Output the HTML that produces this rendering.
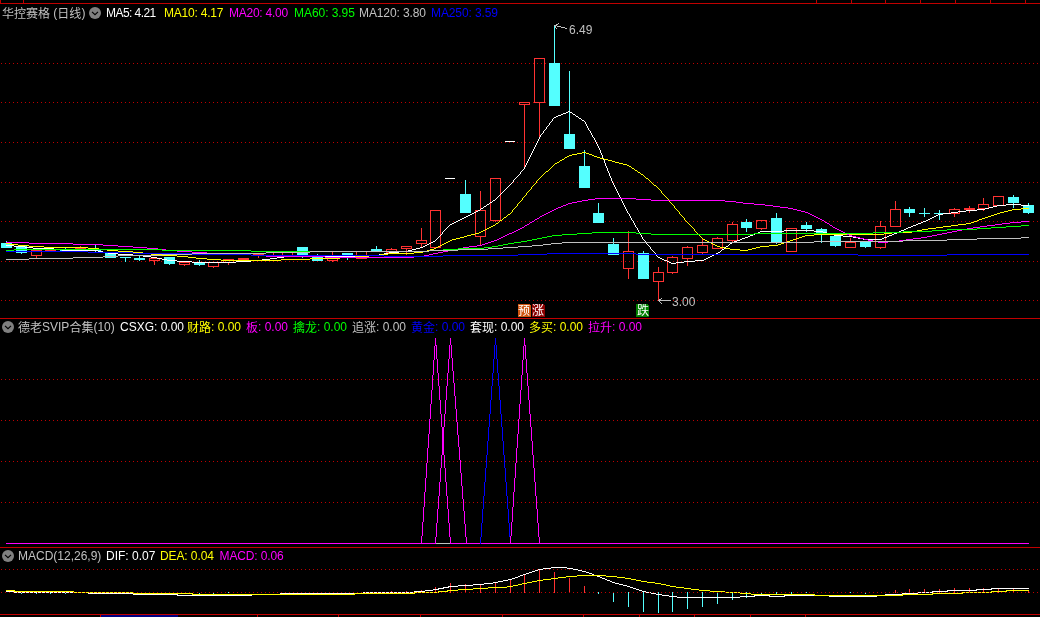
<!DOCTYPE html>
<html><head><meta charset="utf-8"><title>华控赛格(日线)</title>
<style>
html,body{margin:0;padding:0;background:#000;}
#app{position:relative;width:1040px;height:617px;background:#000;overflow:hidden;}
svg{position:absolute;left:0;top:0;}
.t{position:absolute;white-space:pre;font:12px/14px "Liberation Sans","Noto Sans CJK SC",sans-serif;}
.z{position:relative;top:1px;}
.pl{display:inline-block;width:6px;text-align:right;}
.pr{display:inline-block;width:6px;text-align:left;}
#txt{position:absolute;left:0;top:0;width:1040px;height:617px;will-change:transform;transform:translateZ(0);}
</style></head><body>
<div id="app">
<svg width="1040" height="617" viewBox="0 0 1040 617" shape-rendering="crispEdges">
<rect x="0" y="3" width="1040" height="1" fill="#C00000"/>
<rect x="0" y="0" width="1" height="4" fill="#C00000"/>
<rect x="23" y="0" width="1" height="4" fill="#C00000"/>
<rect x="816" y="0" width="1" height="4" fill="#C00000"/>
<rect x="851" y="0" width="1" height="4" fill="#C00000"/>
<rect x="885" y="0" width="1" height="4" fill="#C00000"/>
<rect x="920" y="0" width="1" height="4" fill="#C00000"/>
<rect x="955" y="0" width="1" height="4" fill="#C00000"/>
<rect x="990" y="0" width="1" height="4" fill="#C00000"/>
<rect x="1025" y="0" width="1" height="4" fill="#C00000"/>
<line x1="1" y1="63.5" x2="1040" y2="63.5" stroke="#C00000" stroke-width="1" stroke-dasharray="1 3"/>
<line x1="1" y1="102.5" x2="1040" y2="102.5" stroke="#C00000" stroke-width="1" stroke-dasharray="1 3"/>
<line x1="1" y1="142.5" x2="1040" y2="142.5" stroke="#C00000" stroke-width="1" stroke-dasharray="1 3"/>
<line x1="1" y1="182.5" x2="1040" y2="182.5" stroke="#C00000" stroke-width="1" stroke-dasharray="1 3"/>
<line x1="1" y1="221.5" x2="1040" y2="221.5" stroke="#C00000" stroke-width="1" stroke-dasharray="1 3"/>
<line x1="1" y1="261.5" x2="1040" y2="261.5" stroke="#C00000" stroke-width="1" stroke-dasharray="1 3"/>
<line x1="1" y1="300.5" x2="1040" y2="300.5" stroke="#C00000" stroke-width="1" stroke-dasharray="1 3"/>
<rect x="0" y="318" width="1040" height="1" fill="#C00000"/>
<line x1="1" y1="379.5" x2="1040" y2="379.5" stroke="#C00000" stroke-width="1" stroke-dasharray="1 3"/>
<line x1="1" y1="420.5" x2="1040" y2="420.5" stroke="#C00000" stroke-width="1" stroke-dasharray="1 3"/>
<line x1="1" y1="461.5" x2="1040" y2="461.5" stroke="#C00000" stroke-width="1" stroke-dasharray="1 3"/>
<line x1="1" y1="502.5" x2="1040" y2="502.5" stroke="#C00000" stroke-width="1" stroke-dasharray="1 3"/>
<rect x="0" y="547" width="1040" height="1" fill="#C00000"/>
<line x1="1" y1="569.5" x2="1040" y2="569.5" stroke="#C00000" stroke-width="1" stroke-dasharray="1 3"/>
<line x1="1" y1="592.5" x2="1040" y2="592.5" stroke="#C00000" stroke-width="1" stroke-dasharray="1 3"/>
<rect x="0" y="614" width="1040" height="1" fill="#C00000"/>
<rect x="100" y="614" width="1" height="3" fill="#C00000"/>
<rect x="177" y="614" width="1" height="3" fill="#C00000"/>
<rect x="257" y="614" width="1" height="3" fill="#C00000"/>
<rect x="338" y="614" width="1" height="3" fill="#C00000"/>
<rect x="420" y="614" width="1" height="3" fill="#C00000"/>
<rect x="502" y="614" width="1" height="3" fill="#C00000"/>
<rect x="583" y="614" width="1" height="3" fill="#C00000"/>
<rect x="639" y="614" width="1" height="3" fill="#C00000"/>
<rect x="694" y="614" width="1" height="3" fill="#C00000"/>
<rect x="750" y="614" width="1" height="3" fill="#C00000"/>
<rect x="805" y="614" width="1" height="3" fill="#C00000"/>
<rect x="101" y="615" width="77" height="2" fill="#000080"/>
<rect x="6" y="241" width="1" height="7" fill="#54FFFF"/>
<rect x="1" y="243" width="11" height="5" fill="#54FFFF"/>
<rect x="21" y="246" width="1" height="8" fill="#54FFFF"/>
<rect x="16" y="246" width="11" height="7" fill="#54FFFF"/>
<rect x="36" y="250" width="1" height="1" fill="#FF3232"/>
<rect x="36" y="255" width="1" height="3" fill="#FF3232"/>
<rect x="31" y="250" width="11" height="1" fill="#FF3232"/>
<rect x="31" y="255" width="11" height="1" fill="#FF3232"/>
<rect x="31" y="250" width="1" height="6" fill="#FF3232"/>
<rect x="41" y="250" width="1" height="6" fill="#FF3232"/>
<rect x="50" y="250" width="1" height="1" fill="#FF3232"/>
<rect x="50" y="250" width="1" height="1" fill="#FF3232"/>
<rect x="45" y="250" width="11" height="1" fill="#FF3232"/>
<rect x="65" y="248" width="1" height="3" fill="#54FFFF"/>
<rect x="60" y="250" width="11" height="1" fill="#54FFFF"/>
<rect x="80" y="246" width="1" height="3" fill="#FF3232"/>
<rect x="80" y="248" width="1" height="1" fill="#FF3232"/>
<rect x="75" y="248" width="11" height="1" fill="#FF3232"/>
<rect x="95" y="245" width="1" height="8" fill="#54FFFF"/>
<rect x="90" y="250" width="11" height="1" fill="#54FFFF"/>
<rect x="110" y="253" width="1" height="5" fill="#54FFFF"/>
<rect x="105" y="253" width="11" height="5" fill="#54FFFF"/>
<rect x="125" y="257" width="1" height="5" fill="#54FFFF"/>
<rect x="120" y="257" width="11" height="1" fill="#54FFFF"/>
<rect x="139" y="256" width="1" height="5" fill="#54FFFF"/>
<rect x="134" y="258" width="11" height="2" fill="#54FFFF"/>
<rect x="154" y="258" width="1" height="1" fill="#FF3232"/>
<rect x="154" y="260" width="1" height="5" fill="#FF3232"/>
<rect x="149" y="258" width="11" height="1" fill="#FF3232"/>
<rect x="149" y="260" width="11" height="1" fill="#FF3232"/>
<rect x="149" y="258" width="1" height="3" fill="#FF3232"/>
<rect x="159" y="258" width="1" height="3" fill="#FF3232"/>
<rect x="169" y="257" width="1" height="8" fill="#54FFFF"/>
<rect x="164" y="257" width="11" height="7" fill="#54FFFF"/>
<rect x="184" y="262" width="1" height="1" fill="#FF3232"/>
<rect x="184" y="264" width="1" height="2" fill="#FF3232"/>
<rect x="179" y="262" width="11" height="1" fill="#FF3232"/>
<rect x="179" y="264" width="11" height="1" fill="#FF3232"/>
<rect x="179" y="262" width="1" height="3" fill="#FF3232"/>
<rect x="189" y="262" width="1" height="3" fill="#FF3232"/>
<rect x="199" y="260" width="1" height="6" fill="#54FFFF"/>
<rect x="194" y="263" width="11" height="2" fill="#54FFFF"/>
<rect x="213" y="262" width="1" height="1" fill="#FF3232"/>
<rect x="213" y="266" width="1" height="2" fill="#FF3232"/>
<rect x="208" y="262" width="11" height="1" fill="#FF3232"/>
<rect x="208" y="266" width="11" height="1" fill="#FF3232"/>
<rect x="208" y="262" width="1" height="5" fill="#FF3232"/>
<rect x="218" y="262" width="1" height="5" fill="#FF3232"/>
<rect x="228" y="259" width="1" height="1" fill="#FF3232"/>
<rect x="228" y="262" width="1" height="3" fill="#FF3232"/>
<rect x="223" y="259" width="11" height="1" fill="#FF3232"/>
<rect x="223" y="262" width="11" height="1" fill="#FF3232"/>
<rect x="223" y="259" width="1" height="4" fill="#FF3232"/>
<rect x="233" y="259" width="1" height="4" fill="#FF3232"/>
<rect x="243" y="258" width="1" height="1" fill="#FF3232"/>
<rect x="243" y="259" width="1" height="1" fill="#FF3232"/>
<rect x="238" y="258" width="11" height="2" fill="#FF3232"/>
<rect x="258" y="254" width="1" height="1" fill="#FF3232"/>
<rect x="258" y="254" width="1" height="4" fill="#FF3232"/>
<rect x="253" y="254" width="11" height="1" fill="#FF3232"/>
<rect x="273" y="253" width="1" height="3" fill="#FF3232"/>
<rect x="273" y="255" width="1" height="1" fill="#FF3232"/>
<rect x="268" y="255" width="11" height="1" fill="#FF3232"/>
<rect x="287" y="252" width="1" height="1" fill="#FF3232"/>
<rect x="287" y="255" width="1" height="1" fill="#FF3232"/>
<rect x="282" y="252" width="11" height="1" fill="#FF3232"/>
<rect x="282" y="255" width="11" height="1" fill="#FF3232"/>
<rect x="282" y="252" width="1" height="4" fill="#FF3232"/>
<rect x="292" y="252" width="1" height="4" fill="#FF3232"/>
<rect x="302" y="247" width="1" height="11" fill="#54FFFF"/>
<rect x="297" y="247" width="11" height="8" fill="#54FFFF"/>
<rect x="317" y="254" width="1" height="7" fill="#54FFFF"/>
<rect x="312" y="256" width="11" height="5" fill="#54FFFF"/>
<rect x="332" y="252" width="1" height="6" fill="#FF3232"/>
<rect x="332" y="260" width="1" height="2" fill="#FF3232"/>
<rect x="327" y="257" width="11" height="1" fill="#FF3232"/>
<rect x="327" y="260" width="11" height="1" fill="#FF3232"/>
<rect x="327" y="257" width="1" height="4" fill="#FF3232"/>
<rect x="337" y="257" width="1" height="4" fill="#FF3232"/>
<rect x="347" y="253" width="1" height="7" fill="#54FFFF"/>
<rect x="342" y="253" width="11" height="2" fill="#54FFFF"/>
<rect x="361" y="251" width="1" height="1" fill="#FF3232"/>
<rect x="361" y="258" width="1" height="1" fill="#FF3232"/>
<rect x="356" y="251" width="11" height="1" fill="#FF3232"/>
<rect x="356" y="258" width="11" height="1" fill="#FF3232"/>
<rect x="356" y="251" width="1" height="8" fill="#FF3232"/>
<rect x="366" y="251" width="1" height="8" fill="#FF3232"/>
<rect x="376" y="246" width="1" height="5" fill="#54FFFF"/>
<rect x="371" y="249" width="11" height="2" fill="#54FFFF"/>
<rect x="391" y="248" width="1" height="2" fill="#FF3232"/>
<rect x="391" y="252" width="1" height="2" fill="#FF3232"/>
<rect x="386" y="249" width="11" height="1" fill="#FF3232"/>
<rect x="386" y="252" width="11" height="1" fill="#FF3232"/>
<rect x="386" y="249" width="1" height="4" fill="#FF3232"/>
<rect x="396" y="249" width="1" height="4" fill="#FF3232"/>
<rect x="406" y="246" width="1" height="1" fill="#FF3232"/>
<rect x="406" y="248" width="1" height="7" fill="#FF3232"/>
<rect x="401" y="246" width="11" height="1" fill="#FF3232"/>
<rect x="401" y="248" width="11" height="1" fill="#FF3232"/>
<rect x="401" y="246" width="1" height="3" fill="#FF3232"/>
<rect x="411" y="246" width="1" height="3" fill="#FF3232"/>
<rect x="421" y="228" width="1" height="13" fill="#FF3232"/>
<rect x="421" y="243" width="1" height="4" fill="#FF3232"/>
<rect x="416" y="240" width="11" height="1" fill="#FF3232"/>
<rect x="416" y="243" width="11" height="1" fill="#FF3232"/>
<rect x="416" y="240" width="1" height="4" fill="#FF3232"/>
<rect x="426" y="240" width="1" height="4" fill="#FF3232"/>
<rect x="435" y="210" width="1" height="1" fill="#FF3232"/>
<rect x="435" y="247" width="1" height="1" fill="#FF3232"/>
<rect x="430" y="210" width="11" height="1" fill="#FF3232"/>
<rect x="430" y="247" width="11" height="1" fill="#FF3232"/>
<rect x="430" y="210" width="1" height="38" fill="#FF3232"/>
<rect x="440" y="210" width="1" height="38" fill="#FF3232"/>
<rect x="445" y="178" width="10" height="1" fill="#FFFFFF"/>
<rect x="465" y="180" width="1" height="33" fill="#54FFFF"/>
<rect x="460" y="194" width="11" height="19" fill="#54FFFF"/>
<rect x="480" y="191" width="1" height="20" fill="#FF3232"/>
<rect x="480" y="236" width="1" height="10" fill="#FF3232"/>
<rect x="475" y="210" width="11" height="1" fill="#FF3232"/>
<rect x="475" y="236" width="11" height="1" fill="#FF3232"/>
<rect x="475" y="210" width="1" height="27" fill="#FF3232"/>
<rect x="485" y="210" width="1" height="27" fill="#FF3232"/>
<rect x="495" y="178" width="1" height="1" fill="#FF3232"/>
<rect x="495" y="220" width="1" height="2" fill="#FF3232"/>
<rect x="490" y="178" width="11" height="1" fill="#FF3232"/>
<rect x="490" y="220" width="11" height="1" fill="#FF3232"/>
<rect x="490" y="178" width="1" height="43" fill="#FF3232"/>
<rect x="500" y="178" width="1" height="43" fill="#FF3232"/>
<rect x="505" y="141" width="10" height="1" fill="#FFFFFF"/>
<rect x="524" y="102" width="1" height="1" fill="#FF3232"/>
<rect x="524" y="104" width="1" height="63" fill="#FF3232"/>
<rect x="519" y="102" width="11" height="1" fill="#FF3232"/>
<rect x="519" y="104" width="11" height="1" fill="#FF3232"/>
<rect x="519" y="102" width="1" height="3" fill="#FF3232"/>
<rect x="529" y="102" width="1" height="3" fill="#FF3232"/>
<rect x="539" y="58" width="1" height="1" fill="#FF3232"/>
<rect x="539" y="102" width="1" height="36" fill="#FF3232"/>
<rect x="534" y="58" width="11" height="1" fill="#FF3232"/>
<rect x="534" y="102" width="11" height="1" fill="#FF3232"/>
<rect x="534" y="58" width="1" height="45" fill="#FF3232"/>
<rect x="544" y="58" width="1" height="45" fill="#FF3232"/>
<rect x="554" y="26" width="1" height="80" fill="#54FFFF"/>
<rect x="549" y="63" width="11" height="43" fill="#54FFFF"/>
<rect x="569" y="71" width="1" height="78" fill="#54FFFF"/>
<rect x="564" y="134" width="11" height="15" fill="#54FFFF"/>
<rect x="584" y="150" width="1" height="38" fill="#54FFFF"/>
<rect x="579" y="166" width="11" height="22" fill="#54FFFF"/>
<rect x="598" y="203" width="1" height="20" fill="#54FFFF"/>
<rect x="593" y="213" width="11" height="10" fill="#54FFFF"/>
<rect x="613" y="238" width="1" height="17" fill="#54FFFF"/>
<rect x="608" y="244" width="11" height="11" fill="#54FFFF"/>
<rect x="628" y="231" width="1" height="21" fill="#FF3232"/>
<rect x="628" y="268" width="1" height="11" fill="#FF3232"/>
<rect x="623" y="251" width="11" height="1" fill="#FF3232"/>
<rect x="623" y="268" width="11" height="1" fill="#FF3232"/>
<rect x="623" y="251" width="1" height="18" fill="#FF3232"/>
<rect x="633" y="251" width="1" height="18" fill="#FF3232"/>
<rect x="643" y="251" width="1" height="28" fill="#54FFFF"/>
<rect x="638" y="253" width="11" height="26" fill="#54FFFF"/>
<rect x="658" y="267" width="1" height="6" fill="#FF3232"/>
<rect x="658" y="281" width="1" height="20" fill="#FF3232"/>
<rect x="653" y="272" width="11" height="1" fill="#FF3232"/>
<rect x="653" y="281" width="11" height="1" fill="#FF3232"/>
<rect x="653" y="272" width="1" height="10" fill="#FF3232"/>
<rect x="663" y="272" width="1" height="10" fill="#FF3232"/>
<rect x="672" y="256" width="1" height="2" fill="#FF3232"/>
<rect x="672" y="272" width="1" height="2" fill="#FF3232"/>
<rect x="667" y="257" width="11" height="1" fill="#FF3232"/>
<rect x="667" y="272" width="11" height="1" fill="#FF3232"/>
<rect x="667" y="257" width="1" height="16" fill="#FF3232"/>
<rect x="677" y="257" width="1" height="16" fill="#FF3232"/>
<rect x="687" y="246" width="1" height="2" fill="#FF3232"/>
<rect x="687" y="258" width="1" height="8" fill="#FF3232"/>
<rect x="682" y="247" width="11" height="1" fill="#FF3232"/>
<rect x="682" y="258" width="11" height="1" fill="#FF3232"/>
<rect x="682" y="247" width="1" height="12" fill="#FF3232"/>
<rect x="692" y="247" width="1" height="12" fill="#FF3232"/>
<rect x="702" y="238" width="1" height="8" fill="#FF3232"/>
<rect x="702" y="252" width="1" height="3" fill="#FF3232"/>
<rect x="697" y="245" width="11" height="1" fill="#FF3232"/>
<rect x="697" y="252" width="11" height="1" fill="#FF3232"/>
<rect x="697" y="245" width="1" height="8" fill="#FF3232"/>
<rect x="707" y="245" width="1" height="8" fill="#FF3232"/>
<rect x="717" y="237" width="1" height="2" fill="#FF3232"/>
<rect x="717" y="248" width="1" height="1" fill="#FF3232"/>
<rect x="712" y="238" width="11" height="1" fill="#FF3232"/>
<rect x="712" y="248" width="11" height="1" fill="#FF3232"/>
<rect x="712" y="238" width="1" height="11" fill="#FF3232"/>
<rect x="722" y="238" width="1" height="11" fill="#FF3232"/>
<rect x="732" y="222" width="1" height="3" fill="#FF3232"/>
<rect x="732" y="240" width="1" height="3" fill="#FF3232"/>
<rect x="727" y="224" width="11" height="1" fill="#FF3232"/>
<rect x="727" y="240" width="11" height="1" fill="#FF3232"/>
<rect x="727" y="224" width="1" height="17" fill="#FF3232"/>
<rect x="737" y="224" width="1" height="17" fill="#FF3232"/>
<rect x="746" y="219" width="1" height="13" fill="#54FFFF"/>
<rect x="741" y="222" width="11" height="6" fill="#54FFFF"/>
<rect x="761" y="220" width="1" height="1" fill="#FF3232"/>
<rect x="761" y="228" width="1" height="2" fill="#FF3232"/>
<rect x="756" y="220" width="11" height="1" fill="#FF3232"/>
<rect x="756" y="228" width="11" height="1" fill="#FF3232"/>
<rect x="756" y="220" width="1" height="9" fill="#FF3232"/>
<rect x="766" y="220" width="1" height="9" fill="#FF3232"/>
<rect x="776" y="213" width="1" height="31" fill="#54FFFF"/>
<rect x="771" y="218" width="11" height="25" fill="#54FFFF"/>
<rect x="791" y="228" width="1" height="1" fill="#FF3232"/>
<rect x="791" y="251" width="1" height="1" fill="#FF3232"/>
<rect x="786" y="228" width="11" height="1" fill="#FF3232"/>
<rect x="786" y="251" width="11" height="1" fill="#FF3232"/>
<rect x="786" y="228" width="1" height="24" fill="#FF3232"/>
<rect x="796" y="228" width="1" height="24" fill="#FF3232"/>
<rect x="806" y="222" width="1" height="10" fill="#54FFFF"/>
<rect x="801" y="225" width="11" height="4" fill="#54FFFF"/>
<rect x="821" y="228" width="1" height="15" fill="#54FFFF"/>
<rect x="816" y="229" width="11" height="5" fill="#54FFFF"/>
<rect x="835" y="235" width="1" height="12" fill="#54FFFF"/>
<rect x="830" y="236" width="11" height="10" fill="#54FFFF"/>
<rect x="850" y="238" width="1" height="5" fill="#FF3232"/>
<rect x="850" y="247" width="1" height="1" fill="#FF3232"/>
<rect x="845" y="242" width="11" height="1" fill="#FF3232"/>
<rect x="845" y="247" width="11" height="1" fill="#FF3232"/>
<rect x="845" y="242" width="1" height="6" fill="#FF3232"/>
<rect x="855" y="242" width="1" height="6" fill="#FF3232"/>
<rect x="865" y="242" width="1" height="6" fill="#54FFFF"/>
<rect x="860" y="242" width="11" height="5" fill="#54FFFF"/>
<rect x="880" y="221" width="1" height="6" fill="#FF3232"/>
<rect x="880" y="247" width="1" height="2" fill="#FF3232"/>
<rect x="875" y="226" width="11" height="1" fill="#FF3232"/>
<rect x="875" y="247" width="11" height="1" fill="#FF3232"/>
<rect x="875" y="226" width="1" height="22" fill="#FF3232"/>
<rect x="885" y="226" width="1" height="22" fill="#FF3232"/>
<rect x="895" y="201" width="1" height="9" fill="#FF3232"/>
<rect x="895" y="226" width="1" height="1" fill="#FF3232"/>
<rect x="890" y="209" width="11" height="1" fill="#FF3232"/>
<rect x="890" y="226" width="11" height="1" fill="#FF3232"/>
<rect x="890" y="209" width="1" height="18" fill="#FF3232"/>
<rect x="900" y="209" width="1" height="18" fill="#FF3232"/>
<rect x="909" y="207" width="1" height="10" fill="#54FFFF"/>
<rect x="904" y="209" width="11" height="4" fill="#54FFFF"/>
<rect x="924" y="208" width="1" height="9" fill="#54FFFF"/>
<rect x="919" y="213" width="11" height="1" fill="#54FFFF"/>
<rect x="939" y="210" width="1" height="10" fill="#54FFFF"/>
<rect x="934" y="213" width="11" height="1" fill="#54FFFF"/>
<rect x="954" y="208" width="1" height="2" fill="#FF3232"/>
<rect x="954" y="213" width="1" height="4" fill="#FF3232"/>
<rect x="949" y="209" width="11" height="1" fill="#FF3232"/>
<rect x="949" y="213" width="11" height="1" fill="#FF3232"/>
<rect x="949" y="209" width="1" height="5" fill="#FF3232"/>
<rect x="959" y="209" width="1" height="5" fill="#FF3232"/>
<rect x="969" y="206" width="1" height="3" fill="#FF3232"/>
<rect x="969" y="209" width="1" height="4" fill="#FF3232"/>
<rect x="964" y="208" width="11" height="2" fill="#FF3232"/>
<rect x="983" y="198" width="1" height="7" fill="#FF3232"/>
<rect x="983" y="208" width="1" height="3" fill="#FF3232"/>
<rect x="978" y="204" width="11" height="1" fill="#FF3232"/>
<rect x="978" y="208" width="11" height="1" fill="#FF3232"/>
<rect x="978" y="204" width="1" height="5" fill="#FF3232"/>
<rect x="988" y="204" width="1" height="5" fill="#FF3232"/>
<rect x="998" y="196" width="1" height="1" fill="#FF3232"/>
<rect x="998" y="205" width="1" height="1" fill="#FF3232"/>
<rect x="993" y="196" width="11" height="1" fill="#FF3232"/>
<rect x="993" y="205" width="11" height="1" fill="#FF3232"/>
<rect x="993" y="196" width="1" height="10" fill="#FF3232"/>
<rect x="1003" y="196" width="1" height="10" fill="#FF3232"/>
<rect x="1013" y="195" width="1" height="13" fill="#54FFFF"/>
<rect x="1008" y="197" width="11" height="6" fill="#54FFFF"/>
<rect x="1028" y="203" width="1" height="11" fill="#54FFFF"/>
<rect x="1023" y="205" width="11" height="8" fill="#54FFFF"/>
<path d="M748 236.5h2M843 236.5h10M887 236.5h2M177 261.5h15M236 261.5h15M667 261.5h2M684 261.5h11M192 262.5h44M669 262.5h2M676 262.5h8M133 255.5h10M369 255.5h10M712 255.5h2M484 206.5h2M993 206.5h4M62 250.5h36M408 250.5h4M566 112.5h2M570 112.5h2M745 237.5h3M853 237.5h5M884 237.5h3M25 247.5h8M420 247.5h3M784 230.5h30M901 230.5h3M103 252.5h5M389 252.5h10M718 252.5h2M143 256.5h8M284 256.5h85M710 256.5h2M478 210.5h2M966 210.5h11M671 263.5h5M487 204.5h2M1006 204.5h15M904 229.5h2M561 114.5h2M573 114.5h2M118 254.5h15M379 254.5h5M714 254.5h2M753 234.5h2M830 234.5h4M892 234.5h2M558 115.5h3M427 244.5h2M456 221.5h2M923 221.5h3M450 224.5h2M916 224.5h2M162 259.5h5M262 259.5h8M662 259.5h2M704 259.5h2M167 260.5h10M251 260.5h11M664 260.5h3M695 260.5h9M108 253.5h10M384 253.5h5M716 253.5h2M33 248.5h21M416 248.5h4M750 235.5h3M834 235.5h9M889 235.5h3M760 231.5h24M814 231.5h9M899 231.5h2M98 251.5h5M399 251.5h9M157 258.5h5M270 258.5h7M660 258.5h2M706 258.5h2M464 217.5h2M932 217.5h2M468 215.5h2M936 215.5h2M433 241.5h2M734 241.5h3M742 238.5h3M858 238.5h5M882 238.5h2M758 232.5h2M823 232.5h4M897 232.5h2M977 209.5h8M740 239.5h2M863 239.5h19M460 219.5h2M928 219.5h2M6 245.5h8M425 245.5h2M997 205.5h9M1021 205.5h8M14 246.5h11M423 246.5h2M726 246.5h2M472 213.5h2M943 213.5h8M989 207.5h4M54 249.5h8M412 249.5h4M722 249.5h2M554 117.5h2M452 223.5h2M918 223.5h3M151 257.5h6M277 257.5h7M658 257.5h2M708 257.5h2M474 212.5h2M951 212.5h7M429 243.5h2M730 243.5h2M476 211.5h2M958 211.5h8M908 227.5h3M493 200.5h2M755 233.5h3M827 233.5h3M894 233.5h3M458 220.5h2M926 220.5h2M466 216.5h2M934 216.5h2M462 218.5h2M930 218.5h2M490 202.5h2M470 214.5h2M938 214.5h5M481 208.5h2M985 208.5h4M454 222.5h2M921 222.5h2M913 225.5h3M556 116.5h2M576 116.5h2M579 118.5h2M431 242.5h2M732 242.5h2M563 113.5h3M737 240.5h3M568 111.5h2M906 228.5h2M582 120.5h2M911 226.5h2M610.5 176v2M585.5 122v2M623.5 203v2M527.5 161v2M605.5 163v3M638.5 230v2M595.5 140v2M602.5 155v3M607.5 168v3M641.5 235v2M656.5 255v1M614.5 185v2M635.5 225v2M592.5 135v2M657.5 256v1M643.5 239v1M631.5 218v2M634.5 223v2M446.5 228v1M621.5 199v2M447.5 227v1M505.5 189v1M531.5 153v2M593.5 137v1M533.5 149v2M513.5 180v2M512.5 182v1M639.5 232v1M596.5 142v2M444.5 230v1M608.5 171v2M445.5 229v1M628.5 213v1M503.5 191v1M728.5 245v1M511.5 183v1M729.5 244v1M532.5 151v2M600.5 150v3M589.5 130v1M441.5 234v1M633.5 221v2M590.5 131v2M539.5 137v2M606.5 166v2M653.5 251v1M551.5 121v1M626.5 209v2M525.5 165v2M575.5 115v1M529.5 157v2M629.5 214v2M530.5 155v2M654.5 252v1M612.5 181v2M547.5 126v1M549.5 123v2M603.5 158v2M648.5 245v1M521.5 171v1M500.5 194v1M615.5 187v2M546.5 127v2M598.5 146v2M622.5 201v2M650.5 247v2M498.5 196v1M543.5 131v2M499.5 195v1M517.5 176v1M619.5 195v2M518.5 175v1M520.5 172v2M591.5 133v2M535.5 145v2M537.5 141v2M480.5 209v1M637.5 228v2M604.5 160v3M594.5 138v2M601.5 153v2M515.5 178v1M613.5 183v2M588.5 128v2M516.5 177v1M642.5 237v2M630.5 216v2M526.5 163v2M651.5 249v1M528.5 159v2M617.5 191v2M435.5 240v1M587.5 126v2M620.5 197v2M627.5 211v2M652.5 250v1M646.5 243v1M624.5 205v2M553.5 118v1M599.5 148v2M611.5 178v3M586.5 124v2M538.5 139v2M540.5 135v2M618.5 193v2M581.5 119v1M443.5 231v1M501.5 193v1M550.5 122v1M552.5 119v2M522.5 170v1M524.5 167v2M509.5 185v1M439.5 236v1M625.5 207v2M442.5 232v2M597.5 144v2M507.5 187v1M609.5 173v3M489.5 203v1M437.5 238v1M438.5 237v1M640.5 233v2M655.5 253v2M649.5 246v1M506.5 188v1M536.5 143v2M436.5 239v1M645.5 241v2M644.5 240v1M492.5 201v1M497.5 197v1M483.5 207v1M616.5 189v2M495.5 199v1M534.5 147v2M514.5 179v1M578.5 117v1M510.5 184v1M572.5 113v1M647.5 244v1M584.5 121v1M508.5 186v1M542.5 133v1M544.5 130v1M448.5 226v1M449.5 225v1M721.5 250v1M636.5 227v1M720.5 251v1M725.5 247v1M632.5 220v1M496.5 198v1M504.5 190v1M724.5 248v1M502.5 192v1M548.5 125v1M486.5 205v1M523.5 169v1M440.5 235v1M545.5 129v1M519.5 174v1M541.5 134v1" fill="none" stroke="#FFFFFF" stroke-width="1" />
<path d="M221 260.5h60M1021 208.5h8M991 215.5h3M565 157.5h2M597 157.5h3M460 237.5h4M799 237.5h3M577 153.5h5M586 153.5h3M107 250.5h11M427 250.5h3M740 250.5h8M452 239.5h4M703 239.5h2M793 239.5h3M29 246.5h15M438 246.5h2M717 246.5h3M760 246.5h9M475 233.5h4M884 233.5h8M483 230.5h2M917 230.5h5M464 236.5h3M802 236.5h3M487 228.5h2M928 228.5h8M600 158.5h4M44 247.5h44M436 247.5h2M720 247.5h5M756 247.5h4M471 234.5h4M814 234.5h70M196 258.5h11M310 258.5h30M10 244.5h8M442 244.5h2M713 244.5h2M778 244.5h3M99 249.5h8M430 249.5h4M730 249.5h10M748 249.5h4M207 259.5h14M281 259.5h29M500 220.5h2M977 220.5h2M143 253.5h8M388 253.5h26M162 255.5h15M369 255.5h11M88 248.5h11M434 248.5h2M725 248.5h5M752 248.5h4M188 257.5h8M340 257.5h15M479 232.5h2M892 232.5h20M151 254.5h11M380 254.5h8M629 166.5h2M177 256.5h11M355 256.5h14M489 227.5h2M936 227.5h7M638 172.5h2M118 251.5h15M423 251.5h4M555 163.5h2M619 163.5h4M979 219.5h3M1004 211.5h4M133 252.5h10M414 252.5h9M988 216.5h3M18 245.5h11M440 245.5h2M715 245.5h2M769 245.5h9M632 168.5h2M623 164.5h4M481 231.5h2M912 231.5h5M6 243.5h4M444 243.5h2M711 243.5h2M781 243.5h3M467 235.5h4M805 235.5h9M1012 209.5h9M456 238.5h4M796 238.5h3M982 218.5h3M485 229.5h2M922 229.5h6M1000 212.5h4M958 224.5h8M971 222.5h3M450 240.5h2M705 240.5h2M790 240.5h3M491 226.5h2M943 226.5h8M446 242.5h2M709 242.5h2M784 242.5h3M562 159.5h2M604 159.5h4M1008 210.5h4M646 178.5h2M572 154.5h5M589 154.5h3M560 160.5h2M608 160.5h4M493 225.5h2M951 225.5h7M496 223.5h2M966 223.5h5M654 185.5h2M508 214.5h2M994 214.5h3M582 152.5h4M997 213.5h3M627 165.5h2M612 161.5h3M569 155.5h3M592 155.5h2M567 156.5h2M594 156.5h3M557 162.5h2M615 162.5h4M504 217.5h2M985 217.5h3M448 241.5h2M707 241.5h2M787 241.5h3M974 221.5h3M635 170.5h2M641 174.5h2M546 171.5h2M682.5 216v1M698.5 234v1M514.5 208v1M664.5 195v1M658.5 188v1M643.5 175v1M531.5 187v2M700.5 236v1M512.5 210v2M694.5 229v2M689.5 224v1M690.5 225v1M685.5 220v1M679.5 212v2M526.5 193v2M666.5 197v1M701.5 237v1M648.5 179v1M680.5 214v1M503.5 218v1M674.5 206v2M522.5 198v2M564.5 158v1M545.5 172v1M661.5 191v2M550.5 168v1M551.5 167v1M656.5 186v1M702.5 238v1M502.5 219v1M507.5 215v1M657.5 187v1M548.5 170v1M549.5 169v1M692.5 227v1M506.5 216v1M668.5 199v2M542.5 175v1M640.5 173v1M683.5 217v1M693.5 228v1M540.5 177v1M659.5 189v1M634.5 169v1M536.5 181v2M684.5 218v2M660.5 190v1M653.5 184v1M516.5 206v1M649.5 180v1M681.5 215v1M675.5 208v1M559.5 161v1M650.5 181v1M543.5 174v1M676.5 209v1M670.5 202v1M511.5 212v1M541.5 176v1M524.5 196v1M525.5 195v1M651.5 182v1M644.5 176v1M677.5 210v1M678.5 211v1M521.5 200v1M523.5 197v1M686.5 221v1M539.5 178v1M517.5 204v2M519.5 202v1M520.5 201v1M673.5 205v1M535.5 183v1M537.5 180v1M669.5 201v1M515.5 207v1M533.5 185v1M699.5 235v1M529.5 190v1M530.5 189v1M532.5 186v1M695.5 231v1M510.5 213v1M527.5 192v1M513.5 209v1M528.5 191v1M553.5 165v1M637.5 171v1M554.5 164v1M631.5 167v1M671.5 203v1M665.5 196v1M495.5 224v1M552.5 166v1M696.5 232v1M652.5 183v1M498.5 222v1M645.5 177v1M662.5 193v1M499.5 221v1M672.5 204v1M538.5 179v1M697.5 233v1M691.5 226v1M534.5 184v1M687.5 222v1M667.5 198v1M544.5 173v1M663.5 194v1M518.5 203v1M688.5 223v1" fill="none" stroke="#FFFF00" stroke-width="1" />
<path d="M192 252.5h15M438 252.5h5M251 255.5h15M424 255.5h5M103 245.5h15M477 245.5h5M582 200.5h6M651 200.5h74M499 238.5h2M860 238.5h4M913 238.5h8M325 257.5h89M540 216.5h2M814 216.5h2M6 242.5h23M488 242.5h3M878 242.5h10M595 198.5h41M491 241.5h3M873 241.5h5M888 241.5h11M501 237.5h2M856 237.5h4M921 237.5h6M532 221.5h2M1021 221.5h8M266 256.5h59M414 256.5h10M118 246.5h15M469 246.5h8M207 253.5h14M433 253.5h5M29 243.5h44M485 243.5h3M568 203.5h4M743 203.5h11M563 205.5h3M765 205.5h8M537 218.5h2M818 218.5h2M494 240.5h3M868 240.5h5M899 240.5h7M166 250.5h11M448 250.5h5M158 249.5h8M453 249.5h5M566 204.5h2M754 204.5h11M558 207.5h3M780 207.5h8M588 199.5h7M636 199.5h15M550 211.5h2M801 211.5h4M509 233.5h3M845 233.5h2M942 233.5h5M221 254.5h30M429 254.5h4M133 247.5h14M463 247.5h6M535 219.5h2M820 219.5h2M497 239.5h2M864 239.5h4M906 239.5h7M530 222.5h2M825 222.5h2M1010 222.5h11M525 225.5h2M830 225.5h2M987 225.5h8M505 235.5h2M849 235.5h3M932 235.5h5M147 248.5h11M458 248.5h5M822 220.5h2M827 223.5h2M1002 223.5h8M177 251.5h15M443 251.5h5M520 228.5h2M835 228.5h2M967 228.5h6M522 227.5h2M833 227.5h2M973 227.5h7M507 234.5h2M847 234.5h2M937 234.5h5M73 244.5h30M482 244.5h3M577 201.5h5M725 201.5h11M816 217.5h2M514 231.5h2M841 231.5h2M952 231.5h5M544 214.5h2M810 214.5h2M527 224.5h2M995 224.5h7M516 230.5h2M839 230.5h2M957 230.5h5M980 226.5h7M552 210.5h2M797 210.5h4M561 206.5h2M773 206.5h7M548 212.5h2M805 212.5h3M572 202.5h5M736 202.5h7M512 232.5h2M843 232.5h2M947 232.5h5M556 208.5h2M788 208.5h5M503 236.5h2M852 236.5h4M927 236.5h5M518 229.5h2M837 229.5h2M962 229.5h5M554 209.5h2M793 209.5h4M542 215.5h2M812 215.5h2M546 213.5h2M808 213.5h2M529.5 223v1M524.5 226v1M832.5 226v1M539.5 217v1M824.5 221v1M829.5 224v1M534.5 220v1" fill="none" stroke="#FF00FF" stroke-width="1" />
<path d="M251 251.5h178M592 232.5h44M873 232.5h30M498 245.5h5M508 243.5h6M562 234.5h15M651 234.5h103M14 249.5h148M443 249.5h15M577 233.5h15M636 233.5h15M754 233.5h119M6 250.5h8M162 250.5h89M429 250.5h14M532 239.5h5M947 229.5h30M991 227.5h15M932 230.5h15M903 231.5h29M547 236.5h5M527 240.5h5M458 248.5h26M977 228.5h14M552 235.5h10M1006 226.5h15M484 247.5h8M492 246.5h6M514 242.5h7M542 237.5h5M521 241.5h6M537 238.5h5M1021 225.5h8M503 244.5h5" fill="none" stroke="#00FF00" stroke-width="1" />
<path d="M562 242.5h252M6 259.5h23M814 241.5h89M310 251.5h119M118 255.5h44M947 239.5h30M503 247.5h15M73 257.5h30M903 240.5h44M192 253.5h74M29 258.5h44M551 243.5h11M162 254.5h30M977 238.5h44M429 250.5h29M518 246.5h14M266 252.5h44M458 249.5h30M532 245.5h11M103 256.5h15M488 248.5h15M543 244.5h8M1021 237.5h8" fill="none" stroke="#C0C0C0" stroke-width="1" />
<path d="M192 254.5h59M518 254.5h29M636 254.5h222M947 254.5h82M251 255.5h133M443 255.5h75M858 255.5h89M133 253.5h59M547 253.5h89M6 251.5h82M384 256.5h59M88 252.5h45" fill="none" stroke="#0000FF" stroke-width="1" />
<path d="M557 26.5h4M561 27.5h4M554 25.5h3M565 28.5h2" fill="none" stroke="#C0C0C0" stroke-width="1" />
<path d="M556 24.5h2M554 25.5h2M558.5 23v1" fill="none" stroke="#C0C0C0" stroke-width="1" />
<path d="M555.5 26v2M554.5 25v1M556.5 28v1" fill="none" stroke="#C0C0C0" stroke-width="1" />
<path d="M658 300.5h13" fill="none" stroke="#C0C0C0" stroke-width="1" />
<path d="M659 299.5h2M661.5 298v1M658.5 300v1" fill="none" stroke="#C0C0C0" stroke-width="1" />
<path d="M659.5 301v1M658.5 300v1M661.5 303v1M660.5 302v1" fill="none" stroke="#C0C0C0" stroke-width="1" />
<path d="M518 304 H529 L531 306 V317 H518 Z" fill="#D0540F"/>
<path d="M532 304 H543 L545 306 V317 H532 Z" fill="#8B0000"/>
<path d="M636 304 H647 L649 306 V317 H636 Z" fill="#008000"/>
<rect x="6" y="543" width="1023" height="1" fill="#FF00FF"/>
<rect x="436" y="543" width="15" height="1" fill="#C0C0C0"/>
<path d="M435 345.5h2M422.5 522v14M428.5 434v14M440.5 400v14M446.5 482v14M433.5 360v15M429.5 419v15M434.5 346v14M427.5 448v15M448.5 509v14M443.5 441v14M421.5 536v8M445.5 468v14M437.5 359v14M426.5 463v15M442.5 427v14M432.5 375v15M450.5 537v7M447.5 496v13M425.5 478v14M431.5 390v14M439.5 386v14M436.5 346v13M430.5 404v15M423.5 507v15M424.5 492v15M449.5 523v14M444.5 455v13M441.5 414v13M438.5 373v13M435.5 338v7" fill="none" stroke="#FF00FF" stroke-width="1" />
<path d="M456.5 409v13M452.5 358v13M466.5 537v7M442.5 441v14M438.5 496v13M436.5 523v14M443.5 427v14M453.5 371v12M461.5 473v13M437.5 509v14M455.5 396v13M449.5 345v14M450.5 338v7M464.5 511v13M444.5 414v13M458.5 435v12M448.5 359v14M435.5 537v7M460.5 460v13M447.5 373v13M441.5 455v13M457.5 422v13M463.5 499v12M454.5 383v13M440.5 468v14M465.5 524v13M462.5 486v13M446.5 386v14M451.5 345v13M459.5 447v13M445.5 400v14M439.5 482v14" fill="none" stroke="#FF00FF" stroke-width="1" />
<path d="M490.5 400v14M495.5 338v7M491.5 386v14M501.5 414v13M509.5 523v14M496.5 345v14M503.5 441v14M483.5 496v13M498.5 373v13M488.5 427v14M484.5 482v14M506.5 482v14M489.5 414v13M494.5 345v14M500.5 400v14M482.5 509v14M487.5 441v14M481.5 523v14M497.5 359v14M508.5 509v14M493.5 359v14M480.5 537v7M505.5 468v14M486.5 455v13M502.5 427v14M499.5 386v14M492.5 373v13M507.5 496v13M504.5 455v13M485.5 468v14M510.5 537v7" fill="none" stroke="#0000FF" stroke-width="1" />
<path d="M524 345.5h2M539.5 537v7M526.5 359v14M513.5 492v15M514.5 478v14M528.5 386v14M534.5 468v14M520.5 390v14M530.5 414v13M521.5 375v15M519.5 404v15M515.5 463v15M525.5 346v13M522.5 360v15M536.5 496v13M531.5 427v14M533.5 455v13M518.5 419v15M512.5 507v15M538.5 523v14M535.5 482v14M511.5 522v14M532.5 441v14M527.5 373v13M524.5 338v7M517.5 434v14M523.5 346v14M516.5 448v15M537.5 509v14M529.5 400v14M510.5 536v8" fill="none" stroke="#FF00FF" stroke-width="1" />
<rect x="391" y="591" width="1" height="2" fill="#FF3232"/>
<rect x="406" y="591" width="1" height="2" fill="#FF3232"/>
<rect x="421" y="590" width="1" height="3" fill="#FF3232"/>
<rect x="435" y="587" width="1" height="6" fill="#FF3232"/>
<rect x="450" y="583" width="1" height="10" fill="#FF3232"/>
<rect x="465" y="584" width="1" height="9" fill="#FF3232"/>
<rect x="480" y="585" width="1" height="8" fill="#FF3232"/>
<rect x="495" y="583" width="1" height="10" fill="#FF3232"/>
<rect x="510" y="580" width="1" height="13" fill="#FF3232"/>
<rect x="524" y="575" width="1" height="18" fill="#FF3232"/>
<rect x="539" y="570" width="1" height="23" fill="#FF3232"/>
<rect x="554" y="572" width="1" height="21" fill="#FF3232"/>
<rect x="569" y="578" width="1" height="15" fill="#FF3232"/>
<rect x="584" y="586" width="1" height="7" fill="#FF3232"/>
<rect x="598" y="592" width="1" height="2" fill="#54FFFF"/>
<rect x="613" y="592" width="1" height="10" fill="#54FFFF"/>
<rect x="628" y="592" width="1" height="15" fill="#54FFFF"/>
<rect x="643" y="592" width="1" height="20" fill="#54FFFF"/>
<rect x="658" y="592" width="1" height="21" fill="#54FFFF"/>
<rect x="672" y="592" width="1" height="20" fill="#54FFFF"/>
<rect x="687" y="592" width="1" height="17" fill="#54FFFF"/>
<rect x="702" y="592" width="1" height="15" fill="#54FFFF"/>
<rect x="717" y="592" width="1" height="12" fill="#54FFFF"/>
<rect x="732" y="592" width="1" height="8" fill="#54FFFF"/>
<rect x="746" y="592" width="1" height="6" fill="#54FFFF"/>
<rect x="761" y="592" width="1" height="3" fill="#54FFFF"/>
<rect x="776" y="592" width="1" height="3" fill="#54FFFF"/>
<rect x="791" y="592" width="1" height="2" fill="#54FFFF"/>
<rect x="895" y="590" width="1" height="3" fill="#FF3232"/>
<rect x="909" y="589" width="1" height="4" fill="#FF3232"/>
<rect x="924" y="589" width="1" height="4" fill="#FF3232"/>
<rect x="939" y="589" width="1" height="4" fill="#FF3232"/>
<rect x="954" y="588" width="1" height="5" fill="#FF3232"/>
<rect x="969" y="588" width="1" height="5" fill="#FF3232"/>
<rect x="983" y="588" width="1" height="5" fill="#FF3232"/>
<rect x="998" y="588" width="1" height="5" fill="#FF3232"/>
<rect x="1013" y="588" width="1" height="5" fill="#FF3232"/>
<rect x="1028" y="590" width="1" height="3" fill="#FF3232"/>
<rect x="21" y="593" width="1" height="1" fill="#54FFFF"/>
<rect x="36" y="593" width="1" height="1" fill="#54FFFF"/>
<rect x="50" y="593" width="1" height="1" fill="#54FFFF"/>
<rect x="65" y="593" width="1" height="1" fill="#54FFFF"/>
<rect x="110" y="593" width="1" height="1" fill="#54FFFF"/>
<rect x="125" y="593" width="1" height="1" fill="#54FFFF"/>
<rect x="139" y="593" width="1" height="1" fill="#54FFFF"/>
<rect x="154" y="593" width="1" height="1" fill="#54FFFF"/>
<rect x="169" y="593" width="1" height="1" fill="#54FFFF"/>
<rect x="184" y="593" width="1" height="1" fill="#54FFFF"/>
<rect x="199" y="593" width="1" height="1" fill="#54FFFF"/>
<rect x="213" y="593" width="1" height="1" fill="#54FFFF"/>
<rect x="80" y="592" width="1" height="1" fill="#54FFFF"/>
<rect x="228" y="592" width="1" height="1" fill="#54FFFF"/>
<rect x="806" y="592" width="1" height="1" fill="#54FFFF"/>
<rect x="850" y="592" width="1" height="1" fill="#54FFFF"/>
<rect x="865" y="593" width="1" height="1" fill="#54FFFF"/>
<path d="M177 595.5h75M662 595.5h7M754 595.5h16M784 595.5h46M877 595.5h8M14 592.5h75M363 592.5h52M646 592.5h5M917 592.5h16M6 591.5h9M414 591.5h11M642 591.5h4M932 591.5h16M133 594.5h45M251 594.5h30M656 594.5h6M885 594.5h18M669 596.5h8M740 596.5h15M769 596.5h16M829 596.5h48M677 597.5h63M88 593.5h46M280 593.5h83M651 593.5h5M902 593.5h16M433 589.5h6M636 589.5h3M976 589.5h16M526 573.5h3M589 573.5h3M484 583.5h9M615 583.5h4M551 567.5h16M538 569.5h5M573 569.5h5M438 588.5h6M633 588.5h3M991 588.5h38M493 582.5h5M612 582.5h3M425 590.5h8M639 590.5h3M947 590.5h30M520 575.5h3M594 575.5h3M448 586.5h10M627 586.5h3M543 568.5h8M567 568.5h6M458 585.5h15M623 585.5h4M498 581.5h5M610 581.5h2M532 571.5h3M582 571.5h4M473 584.5h11M619 584.5h4M443 587.5h6M630 587.5h3M503 580.5h5M607 580.5h3M518 576.5h2M597 576.5h3M529 572.5h3M586 572.5h3M523 574.5h3M592 574.5h2M512 578.5h3M602 578.5h3M508 579.5h4M605 579.5h2M515 577.5h3M600 577.5h2M535 570.5h3M578 570.5h4" fill="none" stroke="#FFFFFF" stroke-width="1" />
<path d="M73 592.5h60M414 592.5h25M725 592.5h15M962 592.5h30M473 588.5h15M684 588.5h7M192 594.5h163M751 594.5h64M902 594.5h31M577 575.5h29M558 577.5h8M617 577.5h8M551 578.5h7M625 578.5h6M133 593.5h60M354 593.5h61M740 593.5h11M932 593.5h31M6 590.5h9M447 590.5h11M699 590.5h11M1006 590.5h23M814 595.5h89M507 586.5h6M670 586.5h6M14 591.5h60M438 591.5h10M710 591.5h15M991 591.5h16M458 589.5h15M691 589.5h8M527 582.5h5M647 582.5h8M537 580.5h6M636 580.5h5M532 581.5h5M641 581.5h6M513 585.5h5M666 585.5h4M522 583.5h5M655 583.5h6M566 576.5h11M606 576.5h11M543 579.5h8M631 579.5h5M488 587.5h19M676 587.5h8M518 584.5h4M661 584.5h5" fill="none" stroke="#FFFF00" stroke-width="1" />
<line x1="1" y1="592.5" x2="1040" y2="592.5" stroke="#C00000" stroke-width="1" stroke-dasharray="1 3"/>
</svg>
<svg width="1040" height="617" viewBox="0 0 1040 617"><circle cx="95" cy="13" r="6" fill="#808080"/><path d="M92 11.8 L95 14.7 L98 11.8" stroke="#000" stroke-width="1.1" fill="none"/><circle cx="8" cy="327" r="6" fill="#808080"/><path d="M5 325.8 L8 328.7 L11 325.8" stroke="#000" stroke-width="1.1" fill="none"/><circle cx="8" cy="556" r="6" fill="#808080"/><path d="M5 554.8 L8 557.7 L11 554.8" stroke="#000" stroke-width="1.1" fill="none"/></svg>
<div id="txt">
<span class="t " style="left:2px;top:6px;color:#C0C0C0"><span class="z">华控赛格</span> (<span class="z">日线</span>)</span>
<span class="t " style="left:106px;top:6px;color:#FFFFFF;letter-spacing:-0.55px">MA5: 4.21</span>
<span class="t " style="left:164px;top:6px;color:#FFFF00;letter-spacing:-0.22px">MA10: 4.17</span>
<span class="t " style="left:229px;top:6px;color:#FF00FF;letter-spacing:-0.25px">MA20: 4.00</span>
<span class="t " style="left:294px;top:6px;color:#00FF00;letter-spacing:-0.05px">MA60: 3.95</span>
<span class="t " style="left:359px;top:6px;color:#C0C0C0;letter-spacing:-0.1px">MA120: 3.80</span>
<span class="t " style="left:431px;top:6px;color:#0000FF;letter-spacing:-0.1px">MA250: 3.59</span>
<span class="t " style="left:569px;top:23px;color:#C0C0C0">6.49</span>
<span class="t " style="left:672px;top:295px;color:#C0C0C0">3.00</span>
<span class="t " style="left:518px;top:303px;color:#FFFFFF"><span class="z">预</span></span>
<span class="t " style="left:532px;top:303px;color:#FFFFFF"><span class="z">涨</span></span>
<span class="t " style="left:637px;top:303px;color:#FFFFFF"><span class="z">跌</span></span>
<span class="t " style="left:18px;top:320px;color:#C0C0C0"><span class="z">德老</span>SVIP<span class="z">合集</span>(10)</span>
<span class="t " style="left:120px;top:320px;color:#FFFFFF">CSXG: 0.00</span>
<span class="t " style="left:187px;top:320px;color:#FFFF00"><span class="z">财路</span>: 0.00</span>
<span class="t " style="left:246px;top:320px;color:#FF00FF"><span class="z">板</span>: 0.00</span>
<span class="t " style="left:293px;top:320px;color:#00FF00"><span class="z">擒龙</span>: 0.00</span>
<span class="t " style="left:352px;top:320px;color:#C0C0C0"><span class="z">追涨</span>: 0.00</span>
<span class="t " style="left:411px;top:320px;color:#0000FF"><span class="z">黄金</span>: 0.00</span>
<span class="t " style="left:470px;top:320px;color:#FFFFFF"><span class="z">套现</span>: 0.00</span>
<span class="t " style="left:529px;top:320px;color:#FFFF00"><span class="z">多买</span>: 0.00</span>
<span class="t " style="left:588px;top:320px;color:#FF00FF"><span class="z">拉升</span>: 0.00</span>
<span class="t " style="left:18px;top:549px;color:#C0C0C0">MACD(12,26,9)</span>
<span class="t " style="left:106px;top:549px;color:#FFFFFF">DIF: 0.07</span>
<span class="t " style="left:160px;top:549px;color:#FFFF00;letter-spacing:-0.1px">DEA: 0.04</span>
<span class="t " style="left:219.5px;top:549px;color:#FF00FF;letter-spacing:-0.12px">MACD: 0.06</span>
</div>
</div>
</body></html>
